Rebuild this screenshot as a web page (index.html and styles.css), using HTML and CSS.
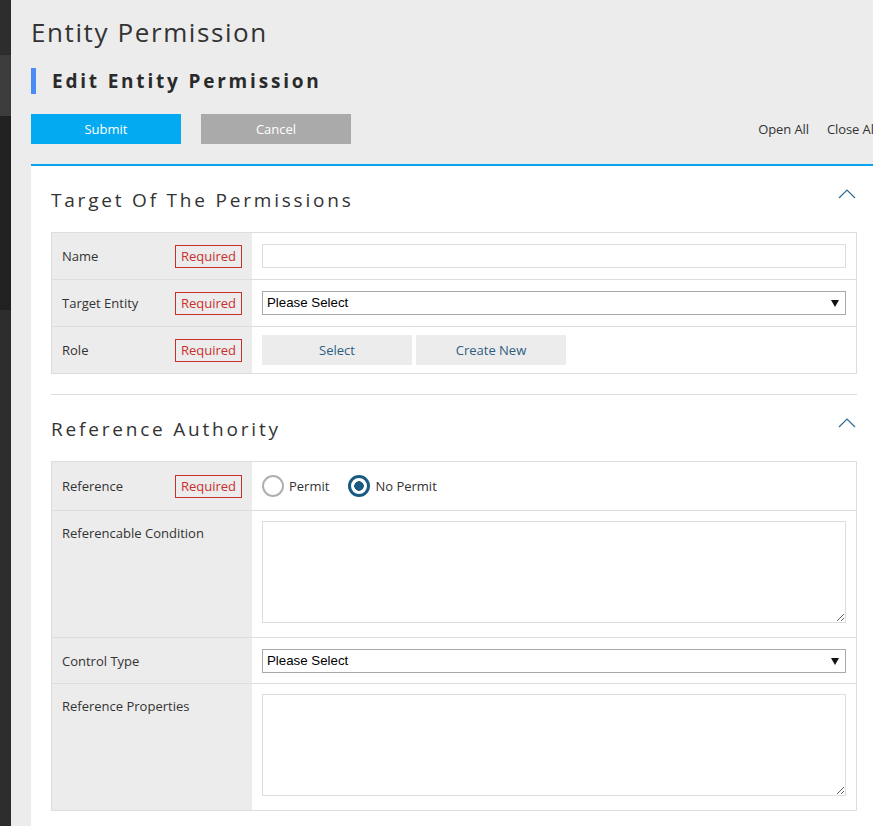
FILE: index.html
```html
<!DOCTYPE html>
<html lang="en">
<head>
<meta charset="utf-8">
<title>Entity Permission</title>
<link rel="stylesheet" href="styles.css">
</head>
<body>
<div class="page">
  <div class="sidebar">
    <div class="sb sb1"></div>
    <div class="sb sb2"></div>
    <div class="sb sb3"></div>
    <div class="sb sb4"></div>
  </div>
  <main class="main">
    <h1 class="title">Entity Permission</h1>
    <h2 class="subtitle">Edit Entity Permission</h2>
    <div class="toolbar">
      <button class="btn btn-primary" type="button">Submit</button>
      <button class="btn btn-cancel" type="button">Cancel</button>
      <div class="toggles">
        <a class="toggle">Open All</a>
        <a class="toggle">Close All</a>
      </div>
    </div>
    <div class="panel">
      <section class="section section-first">
        <div class="section-head">
          <h3 class="section-title">Target Of The Permissions</h3>
          <svg class="chevron" width="18" height="10" viewBox="0 0 18 10"><polyline points="1,9 9,1 17,9" fill="none" stroke="#2b6a96" stroke-width="1.2"/></svg>
        </div>
        <div class="form-table">
          <div class="row">
            <div class="label"><span>Name</span><span class="req">Required</span></div>
            <div class="field"><input class="text" type="text"></div>
          </div>
          <div class="row">
            <div class="label"><span>Target Entity</span><span class="req">Required</span></div>
            <div class="field"><div class="select"><span>Please Select</span></div></div>
          </div>
          <div class="row row-last">
            <div class="label"><span>Role</span><span class="req">Required</span></div>
            <div class="field field-buttons">
              <button class="btn-sub" type="button">Select</button>
              <button class="btn-sub" type="button">Create New</button>
            </div>
          </div>
        </div>
      </section>
      <section class="section">
        <div class="section-head">
          <h3 class="section-title">Reference Authority</h3>
          <svg class="chevron" width="18" height="10" viewBox="0 0 18 10"><polyline points="1,9 9,1 17,9" fill="none" stroke="#2b6a96" stroke-width="1.2"/></svg>
        </div>
        <div class="form-table">
          <div class="row row-radio">
            <div class="label"><span>Reference</span><span class="req">Required</span></div>
            <div class="field field-radios">
              <label class="radio-item"><input class="radio" type="radio" name="ref"><span>Permit</span></label>
              <label class="radio-item"><input class="radio" type="radio" name="ref" checked><span>No Permit</span></label>
            </div>
          </div>
          <div class="row row-tall">
            <div class="label label-top"><span>Referencable Condition</span></div>
            <div class="field field-tall"><textarea class="area"></textarea></div>
          </div>
          <div class="row row-ctl">
            <div class="label"><span>Control Type</span></div>
            <div class="field"><div class="select"><span>Please Select</span></div></div>
          </div>
          <div class="row row-tall row-last">
            <div class="label label-top"><span>Reference Properties</span></div>
            <div class="field field-tall"><textarea class="area"></textarea></div>
          </div>
        </div>
      </section>
    </div>
  </main>
</div>
</body>
</html>
```

FILE: styles.css
```css
html, body {
  margin: 0;
  padding: 0;
  overflow: hidden;
  height: 100%;
}
body {
  background: #ececec;
  font-family: "Open Sans", "Noto Sans", sans-serif;
  font-size: 13px;
  color: #333;
}
.page {
  display: flex;
  min-height: 100%;
}
.sidebar {
  width: 11px;
  flex: none;
  display: flex;
  flex-direction: column;
}
.sb1 { height: 55px; background: #2d2d2d; }
.sb2 { height: 61px; background: #3c3c3c; }
.sb3 { height: 194px; background: #212121; }
.sb4 { flex: 1; background: #2d2d2d; }

.main {
  flex: none;
  width: 846px;
  padding-left: 20px;
}
.title {
  margin: 0;
  padding-top: 14px;
  font-size: 26px;
  line-height: 36px;
  font-weight: 400;
  letter-spacing: 1.6px;
  color: #333;
}
.subtitle {
  margin: 18px 0 0;
  height: 26px;
  line-height: 26px;
  border-left: 5px solid #4a8bf5;
  padding-left: 16px;
  font-size: 19px;
  font-weight: 700;
  letter-spacing: 2.8px;
  color: #2a2a2a;
}
.toolbar {
  margin-top: 20px;
  display: flex;
  align-items: center;
  gap: 20px;
}
.btn {
  width: 150px;
  height: 30px;
  border: 0;
  padding: 0;
  font-family: inherit;
  font-size: 13px;
  color: #fff;
}
.btn-primary { background: #03aaf2; }
.btn-cancel { background: #aaaaaa; }
.toggles {
  margin-left: auto;
  display: flex;
  gap: 18px;
}
.toggle {
  color: #333;
  white-space: nowrap;
  letter-spacing: -0.1px;
}
.panel {
  margin-top: 20px;
  background: #fff;
  border-top: 2px solid #06a4ea;
  padding: 0 20px;
  min-height: 700px;
}
.section-first {
  border-bottom: 1px solid #dddddd;
  padding-bottom: 20px;
}
.section-head {
  display: flex;
  align-items: flex-start;
  justify-content: space-between;
  padding: 22px 0 20px;
}
.section-title {
  margin: 0;
  font-size: 19px;
  line-height: 24px;
  font-weight: 400;
  letter-spacing: 2.8px;
  color: #333;
}
.chevron {
  margin-top: 1px;
  margin-right: 1px;
}
.form-table {
  border: 1px solid #dddddd;
}
.row {
  display: grid;
  grid-template-columns: 200px 1fr;
  min-height: 46px;
  border-bottom: 1px solid #dddddd;
}
.row-last { border-bottom: 0; }
.row-radio { min-height: 48px; }
.row-ctl { min-height: 45px; }
.label {
  background: #ececec;
  display: flex;
  align-items: center;
  justify-content: space-between;
  padding: 0 10px;
}
.label-top {
  align-items: flex-start;
  padding-top: 13px;
}
.req {
  border: 1px solid #c9302c;
  color: #c9302c;
  line-height: 21px;
  padding: 0 5px;
}
.field {
  display: flex;
  align-items: center;
  padding: 0 10px;
}
.text {
  box-sizing: border-box;
  width: 100%;
  height: 24px;
  border: 1px solid #dddddd;
  margin: 0;
  padding: 0 4px;
  outline: none;
}
.select {
  position: relative;
  box-sizing: border-box;
  width: 100%;
  height: 24px;
  border: 1px solid #a9a9a9;
  background: #fff;
  font-family: "Liberation Sans", Arial, sans-serif;
  font-size: 13.3px;
  color: #000;
  line-height: 22px;
  padding-left: 4px;
}
.select::after {
  content: "";
  position: absolute;
  right: 6px;
  top: 8px;
  border-left: 4px solid transparent;
  border-right: 4px solid transparent;
  border-top: 7px solid #111;
}
.field-buttons { gap: 4px; }
.btn-sub {
  width: 150px;
  height: 30px;
  border: 0;
  padding: 0;
  background: #ececec;
  color: #2d5e7f;
  font-family: inherit;
  font-size: 13px;
}
.field-radios { gap: 19px; }
.radio-item {
  display: flex;
  align-items: center;
  gap: 5px;
}
.radio {
  appearance: none;
  -webkit-appearance: none;
  box-sizing: border-box;
  width: 22px;
  height: 22px;
  margin: 0;
  border: 2px solid #b0b0b0;
  border-radius: 50%;
  background: #fff;
}
.radio:checked {
  border: 3px solid #1a5a82;
  background: radial-gradient(circle, #1a5a82 0 4.5px, #fff 5px);
}
.field-tall {
  align-items: flex-start;
  padding: 10px 10px 14px;
}
.area {
  display: block;
  box-sizing: border-box;
  width: 100%;
  height: 102px;
  margin: 0;
  border: 1px solid #dddddd;
  outline: none;
  font-family: inherit;
}
```
